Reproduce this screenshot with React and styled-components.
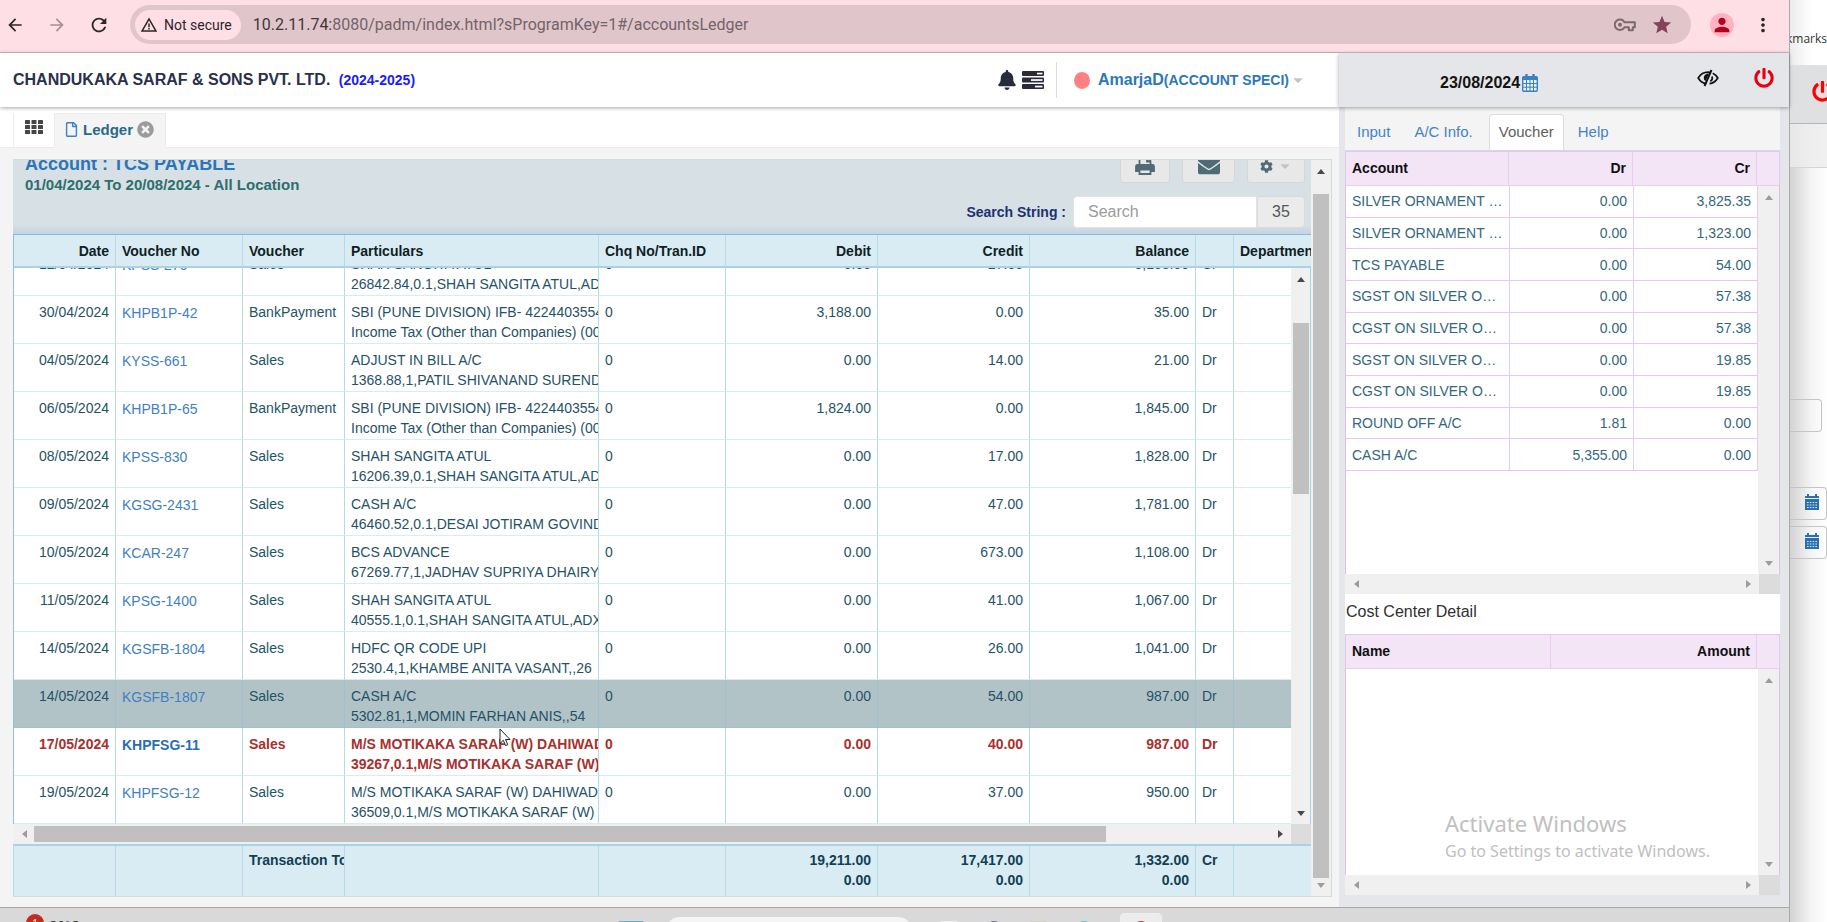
import React from "react";
import styled, { createGlobalStyle, css } from "styled-components";
import { FaBell, FaEnvelope, FaCog, FaPowerOff, FaRegFile, FaCaretDown, FaTimesCircle } from "react-icons/fa";
import { MdArrowBack, MdArrowForward, MdRefresh, MdWarningAmber, MdStar, MdPerson, MdMoreVert } from "react-icons/md";

const sans = `"Liberation Sans", Arial, sans-serif`;
const system = `"Open Sans", "Noto Sans", sans-serif`;

const GlobalStyle = createGlobalStyle`
  * { box-sizing: border-box; }
  body { margin: 0; font-family: ${sans}; font-size: 14px; color: #1f5266; background: #fff; }
  button, input { font: inherit; color: inherit; margin: 0; }
  button { cursor: pointer; }
  svg { display: block; flex: none; }
`;

const Desktop = styled.div`
  display: grid;
  grid-template-columns: minmax(0, 1fr) 38px;
  height: 100vh;
  overflow: hidden;
`;

const Screen = styled.div`
  display: flex;
  flex-direction: column;
  min-width: 0;
  min-height: 0;
`;

/* browser toolbar */
const BrowserBar = styled.header`
  display: flex;
  align-items: center;
  height: 53px;
  flex: none;
  padding: 0 15px 3px 4px;
  background: #ffdfe6;
  border-bottom: 1px solid #d3b9be;
  font-family: Roboto, sans-serif;
  color: #2d2628;
`;
const BarButton = styled.button`
  display: grid;
  place-items: center;
  width: 22px;
  height: 38px;
  padding: 0;
  border: 0;
  background: none;
  color: ${(p) => (p.$dim ? "#a58e95" : "inherit")};
`;
const NavGroup = styled.nav`
  display: flex;
  gap: 20px;
  width: 126px;
`;
const Address = styled.div`
  display: flex;
  align-items: center;
  flex: 1;
  min-width: 0;
  height: 39px;
  padding: 0 18px 0 5px;
  border-radius: 20px;
  background: #e0c6cb;
`;
const Insecure = styled.span`
  display: flex;
  align-items: center;
  gap: 6px;
  height: 30px;
  padding: 0 9px 0 5px;
  border-radius: 15px;
  background: #ffdfe6;
  font-size: 14px;
  white-space: nowrap;
`;
const Url = styled.span`
  flex: 1;
  padding-left: 12px;
  font-size: 16px;
  color: #74636a;
  white-space: nowrap;
  overflow: hidden;
  b { font-weight: 400; color: #40363a; }
`;
const AddressIcons = styled.span`
  display: flex;
  align-items: center;
  gap: 15px;
  color: #85425b;
`;
const Avatar = styled.span`
  display: grid;
  place-items: center;
  width: 24px;
  height: 24px;
  border-radius: 50%;
  background: #ffb3c1;
  color: #b3001f;
`;
const BarEnd = styled.div`
  display: flex;
  align-items: center;
  gap: 18px;
  padding-left: 19px;
`;

/* application frame */
const AppArea = styled.div`
  display: flex;
  flex: 1;
  min-height: 0;
`;
const MainColumn = styled.main`
  display: flex;
  flex-direction: column;
  flex: 1;
  min-width: 0;
  background: #f4f4f4;
`;
const topBar = css`
  display: flex;
  align-items: center;
  flex: none;
  height: 54px;
  position: relative;
  z-index: 1;
  box-shadow: 0 1px 4px rgba(0, 0, 0, 0.35);
`;
const CompanyBar = styled.div`
  ${topBar}
  padding: 0 34px 0 13px;
  background: #fff;
`;
const Company = styled.h1`
  flex: 1;
  margin: 0;
  font-size: 16px;
  color: #29304a;
  span { margin-left: 4px; font-size: 14px; color: #1a1aff; }
`;
const CompanyIcons = styled.div`
  display: flex;
  align-items: center;
  gap: 5px;
  height: 36px;
  padding-right: 12px;
  border-right: 1px solid #dcdcdc;
  color: #272b3b;
`;
const UserMenu = styled.button`
  display: flex;
  align-items: center;
  gap: 8px;
  padding: 0 0 0 17px;
  border: 0;
  background: none;
  color: #2b78b9;
  font-weight: 700;
  font-size: 14px;
  white-space: nowrap;
  strong { font-size: 16px; }
`;
const Dot = styled.i`
  width: 16px;
  height: 17px;
  border-radius: 50%;
  background: #ff8080;
`;
const UserCaret = styled(FaCaretDown)`
  margin-left: -6px;
  color: #c4c4c4;
`;

const DocTabs = styled.div`
  display: flex;
  align-items: flex-end;
  flex: none;
  height: 41px;
  padding-left: 13px;
  background: #fff;
  border-bottom: 1px solid #ebebeb;
`;
const AppsButton = styled.button`
  display: grid;
  place-items: center;
  width: 41px;
  height: 34px;
  padding: 0 0 6px;
  border: 0;
  border-left: 1px solid #ececec;
  background: none;
  color: #454545;
`;
const DocTab = styled.div`
  display: flex;
  align-items: center;
  gap: 4px;
  height: 35px;
  width: 112px;
  margin-bottom: -1px;
  padding: 0 0 4px 9px;
  border: 1px solid #ececec;
  border-bottom: 0;
  background: #f4f4f4;
  color: #2b6a86;
  font-size: 15px;
  font-weight: 700;
  > svg { color: #3c83c4; }
`;
const CloseButton = styled.button`
  padding: 0;
  border: 0;
  background: none;
  color: #9b9b9b;
`;

const PanelSpace = styled.div`
  display: flex;
  flex: 1;
  min-height: 0;
  padding: 11px 7px 10px 13px;
`;
const Panel = styled.section`
  display: flex;
  flex: 1;
  min-width: 0;
  border: 1px solid #d3dcdf;
  border-left: 0;
`;
const Ledger = styled.div`
  display: flex;
  flex-direction: column;
  flex: 1;
  min-width: 0;
  background: #d6e0e5;
  overflow: hidden;
`;
const LedgerHead = styled.div`
  display: flex;
  justify-content: space-between;
  align-items: flex-end;
  flex: none;
  height: 74px;
  padding: 0 6px 6px 12px;
  overflow: hidden;
  background: linear-gradient(#d6e0e5 88%, #c3d3e2);
`;
const LedgerTitle = styled.div`
  height: 75px;
  color: #2d6f6c;
  font-size: 15px;
  font-weight: 700;
  line-height: 20px;
  h2 { margin: 0; font-size: 18px; line-height: 22px; color: #2c74b8; }
`;
const LedgerTools = styled.div`
  display: flex;
  flex-direction: column;
  align-items: flex-end;
  gap: 13px;
`;
const ToolRow = styled.div`
  display: flex;
  gap: 12px;
`;
const ToolButton = styled.button`
  display: flex;
  align-items: center;
  justify-content: center;
  gap: 5px;
  width: ${(p) => p.$w || 50}px;
  height: 34px;
  padding: 0;
  border: 1px solid #d6d6d6;
  border-radius: 3px;
  background: #e8e8e8;
  color: #4f6b76;
`;
const SearchRow = styled.div`
  display: flex;
  align-items: center;
  label { padding-right: 7px; color: #1c3170; font-weight: 700; }
  input {
    width: 184px;
    height: 32px;
    padding: 0 14px;
    border: 1px solid #e3e3e3;
    border-radius: 4px 0 0 4px;
    background: #fff;
    font-size: 16px;
    outline: 0;
  }
  input::placeholder { color: #9b9b9b; opacity: 1; }
  output {
    width: 48px;
    height: 32px;
    border: 1px solid #dadada;
    border-radius: 0 4px 4px 0;
    background: #ebebeb;
    color: #555;
    font-size: 16px;
    line-height: 30px;
    text-align: center;
  }
`;

const Grid = styled.table`
  width: 100%;
  table-layout: fixed;
  border-collapse: separate;
  border-spacing: 0;
  th, td {
    padding: 6px 6px 1px;
    border-right: 1px solid #b5dae8;
    line-height: 20px;
    text-align: left;
    vertical-align: top;
    white-space: nowrap;
    overflow: hidden;
  }
  th:last-child, td:last-child { padding-right: 0; border-right: 0; }
  .num { text-align: right; }
`;
const GridHead = styled(Grid)`
  flex: none;
  border-top: 1px solid #8abadb;
  border-left: 1px solid #8fc0da;
  background: #d9ecf4;
  th { height: 33px; border-bottom: 2px solid #aad2e4; color: #0f1e24; }
`;
const GridScroller = styled.div`
  display: flex;
  flex: 1;
  min-height: 0;
  border-right: 1px solid #a9d2e6;
  background: #fff;
`;
const GridView = styled.div`
  flex: 1;
  min-width: 0;
  overflow: hidden;
  border-left: 1px solid #8fc0da;
`;
const GridBody = styled(Grid)`
  margin-top: -20px;
  td { height: 48px; border-bottom: 1px solid #d8ecf3; }
  a { display: block; line-height: 22px; color: #427fc1; text-decoration: none; }
`;
const Row = styled.tr`
  ${(p) => p.$state === "selected" && css`background: #b2c3c7; td { border-color: #9fc1cd; }`}
  ${(p) => p.$state === "flagged" && css`color: #a8302d; font-weight: 700; a { color: #2b6cb5; }`}
`;
const GridFoot = styled(Grid)`
  flex: none;
  border-top: 2px solid #aad2e4;
  border-left: 1px solid #b5dae8;
  background: #d9ecf4;
  color: #123f54;
  font-weight: 700;
  td { height: 50px; padding-top: 4px; }
`;

/* scroll bars */
const Track = styled.div`
  display: flex;
  align-items: center;
  justify-content: space-between;
  flex: none;
  background: #f0f0f0;
  color: ${(p) => (p.$dim ? "#9c9c9c" : "#484848")};
  ${(p) => p.$dimStart && css`> :first-child { color: #9c9c9c; }`}
  ${(p) => p.$dimEnd && css`> :last-child { color: #9c9c9c; }`}
  ${(p) => (p.$v
    ? css`flex-direction: column; width: ${p.$size}px; padding: 9px 0 8px;`
    : css`height: ${p.$size}px; padding: 0 8px 0 9px;`)}
`;
const Thumb = styled.div`
  background: #c0c0c0;
  ${(p) => (p.$v ? css`width: 16px;` : css`height: 16px;`)}
  flex: 0 0 ${(p) => p.$length};
  ${(p) => p.$lead && css`margin-${p.$v ? "top" : "left"}: ${p.$lead}px;`}
  ${(p) => (p.$v ? css`margin-bottom: auto;` : css`margin-right: auto;`)}
`;
const HRow = styled.div`
  display: flex;
  flex: none;
  > :first-child { flex: 1; }
`;
const Corner = styled.div`
  width: ${(p) => p.$w}px;
  background: #dcdcdc;
`;

/* side column */
const Side = styled.aside`
  display: flex;
  flex-direction: column;
  flex: none;
  width: 450px;
  background: #e4e6e9;
`;
const SideBar = styled.div`
  ${topBar}
  padding: 0 15px 0 101px;
  background: #e4e6e9;
`;
const DateField = styled.button`
  display: flex;
  align-items: center;
  gap: 2px;
  padding: 6px 0 0;
  margin-right: auto;
  border: 0;
  background: none;
  color: #141414;
  font-size: 16px;
  font-weight: 700;
`;
const IconButton = styled.button`
  padding: 0 0 4px;
  border: 0;
  background: none;
  color: ${(p) => p.$color};
  margin-left: 35px;
`;
const SideBody = styled.div`
  display: flex;
  flex-direction: column;
  flex: 1;
  min-height: 0;
  padding: 0 9px 12px 6px;
`;
const SideTabs = styled.div`
  display: flex;
  align-items: flex-end;
  flex: none;
  height: 44px;
  background: #f4f4f4;
  border-bottom: 1px solid #d5dbe2;
`;
const SideTab = styled.button`
  height: 36px;
  padding: 0 ${(p) => (p.$active ? 9 : 11)}px 3px;
  border: 1px solid transparent;
  border-bottom: 0;
  border-radius: 4px 4px 0 0;
  background: none;
  color: #4582c3;
  font-size: 15px;
  ${(p) => p.$active && css`margin: 0 2px 0 4px; background: #fff; border-color: #dcdcdc; color: #606060;`}
`;
const SideTable = styled.table`
  width: 100%;
  table-layout: fixed;
  border-collapse: separate;
  border-spacing: 0;
  th, td {
    padding: 0 6px;
    text-align: left;
    white-space: nowrap;
    overflow: hidden;
    text-overflow: ellipsis;
    border-right: 1px solid #ecc9ee;
    border-bottom: 1px solid #e8c5ea;
  }
  .num { text-align: right; }
`;
const SideHead = styled(SideTable)`
  flex: none;
  border: solid #dccbea;
  border-width: 1px 1px 0;
  background: #f3e4f6;
  color: #101010;
  th { height: 34px; padding-bottom: 2px; border-color: #ebcdef; }
  th:last-child { border-right: 0; }
`;
const SideRows = styled(SideTable)`
  height: 285px;
  color: #33677c;
`;
const SideBlock = styled.div`
  display: flex;
  flex-direction: column;
  min-height: 0;
  ${(p) => (p.$grow ? css`flex: 1;` : css`flex: 0 0 487px;`)}
`;
const SideScroller = styled.div`
  display: flex;
  flex: 1;
  min-height: 0;
  border: solid #dfbfe6;
  border-width: 0 1px;
  background: #fff;
`;
const SideView = styled.div`
  position: relative;
  flex: 1;
  min-width: 0;
  overflow: hidden;
`;
const SideHeading = styled.h3`
  flex: none;
  height: 40px;
  margin: 0;
  padding-left: 1px;
  background: #fff;
  color: #303030;
  font-size: 16px;
  font-weight: 400;
  line-height: 36px;
`;
const Watermark = styled.div`
  position: absolute;
  right: 45px;
  bottom: 12px;
  width: 268px;
  font-family: "Noto Sans", sans-serif;
  color: #c0c0c0;
  font-size: 16px;
  line-height: 24px;
  white-space: nowrap;
  p { margin: 0; font-size: 22px; line-height: 32px; }
`;

/* task bar, cut off by the lower screen edge */
const TaskBar = styled.footer`
  display: flex;
  align-items: flex-start;
  flex: none;
  height: 15px;
  overflow: hidden;
  padding: 0 97px 0 26px;
  background: #d9d9d9;
  border-top: 1px solid #a8a8a8;
  font-family: ${system};
  font-size: 13px;
  line-height: 18px;
  color: #333;
`;
const Weather = styled.span`
  display: flex;
  gap: 6px;
  padding-top: 6px;
  i {
    width: 18px;
    height: 18px;
    border-radius: 50%;
    background: #c42b1c;
    color: #fff;
    font-size: 10px;
    font-style: normal;
    text-align: center;
  }
  span { padding-top: 2px; }
`;
const TaskGroup = styled.div`
  display: flex;
  flex: 1;
  align-items: flex-start;
  justify-content: center;
  gap: 27px;
  padding: 9px 0 0 220px;
`;
const TaskSearch = styled.span`
  width: 248px;
  height: 30px;
  margin-left: -6px;
  border-radius: 15px;
  background: #f5f5f5;
`;
const TaskIcon = styled.i`
  width: ${(p) => p.$w || 18}px;
  height: 20px;
  margin-top: 4px;
  border-radius: ${(p) => (p.$round ? "50%" : "2px")};
  background: ${(p) => p.$c};
`;
const ActiveTask = styled.span`
  display: flex;
  justify-content: center;
  width: 42px;
  height: 30px;
  margin-top: -4px;
  border: 1px solid #efefef;
  border-radius: 4px;
  background: #ececec;
  i { margin-top: 7px; }
`;
const Clock = styled.span`
  display: flex;
  gap: 152px;
  padding-top: 9px;
`;

/* window behind, seen as a strip on the right */
const Behind = styled.div`
  display: flex;
  flex-direction: column;
  overflow: hidden;
  border-left: 1px solid #a9a9a9;
  background: linear-gradient(to right, #d3d3d3, #f3f3f3 55%, #fff);
`;
const BehindTop = styled.div`
  display: flex;
  justify-content: flex-end;
  height: 65px;
  flex: none;
  padding-top: 29px;
  background: linear-gradient(to right, #ececec, #fff 60%);
  font-family: ${system};
  font-size: 12px;
  line-height: 20px;
  color: #333;
  white-space: nowrap;
`;
const BehindHeader = styled.div`
  display: flex;
  align-items: center;
  height: 59px;
  flex: none;
  padding: 0 0 6px 22px;
  background: #dfe0e2;
  border-bottom: 1px solid #b5b5b5;
  color: #f00;
`;
const BehindTabs = styled.div`
  height: 44px;
  flex: none;
  background: rgba(236, 236, 236, 0.8);
  border-bottom: 1px solid #d5d5d5;
`;
const BehindFields = styled.div`
  display: flex;
  flex-direction: column;
  padding-top: 231px;
`;
const BehindField = styled.div`
  display: flex;
  align-items: center;
  justify-content: flex-end;
  width: ${(p) => p.$w};
  height: 33px;
  margin-bottom: ${(p) => p.$gap}px;
  padding: 0 7px 4px 0;
  border: 1px solid #c4c4c4;
  border-left: 0;
  border-radius: 0 4px 4px 0;
`;

const Pointer = styled.svg`
  position: fixed;
  left: 499px;
  top: 728px;
`;

const Tri = ({ dir }) => {
  const d = { up: "M0 5h8L4 0z", down: "M0 0h8L4 5z", left: "M5 0v8L0 4z", right: "M0 0v8l5-4z" }[dir];
  const v = dir === "up" || dir === "down";
  return (
    <svg width={v ? 8 : 5} height={v ? 5 : 8} viewBox={v ? "0 0 8 5" : "0 0 5 8"} fill="currentColor">
      <path d={d} />
    </svg>
  );
};
const ScrollBar = ({ v, size = 20, dim, dimStart, dimEnd, children }) => (
  <Track $v={v} $size={size} $dim={dim} $dimStart={dimStart} $dimEnd={dimEnd} aria-hidden="true">
    <Tri dir={v ? "up" : "left"} />
    {children}
    <Tri dir={v ? "down" : "right"} />
  </Track>
);

const KeyIcon = () => (
  <svg width="22" height="14" viewBox="0 0 22 14" fill="none" stroke="#7c686e" strokeWidth="2">
    <path d="M10.5 4.2h10.3v5h-2v3h-4v-3h-4.3A5.2 5.2 0 1 1 10.5 4.2z" strokeLinejoin="round" />
    <circle cx="6" cy="6.8" r="2" fill="#7c686e" stroke="none" />
  </svg>
);
const TasksIcon = () => (
  <svg width="22" height="18" viewBox="0 0 22 18">
    <g fill="currentColor">
      <rect width="22" height="5" rx="1" />
      <rect y="6.5" width="22" height="5" rx="1" />
      <rect y="13" width="22" height="5" rx="1" />
    </g>
    <g fill="#fff">
      <rect x="15" y="1.7" width="5.5" height="1.7" />
      <rect x="9" y="8.2" width="11.5" height="1.7" />
      <rect x="13" y="14.7" width="7.5" height="1.7" />
    </g>
  </svg>
);
const GridIcon = () => (
  <svg width="18" height="14" viewBox="0 0 18 14" fill="currentColor">
    {[0, 5, 10].map((y) => [0, 6.5, 13].map((x) => <rect key={`${x}-${y}`} x={x} y={y} width="5" height="4" rx="0.6" />))}
  </svg>
);
const PrintIcon = () => (
  <svg width="20" height="18" viewBox="0 0 20 18" fill="none" stroke="currentColor" strokeWidth="1.8">
    <path d="M4.5 8V1h8l3 3v4M12 1v3.5h3.5" />
    <path d="M2.5 8h15q1.5 0 1.5 1.5V14H1V9.5Q1 8 2.5 8z" fill="currentColor" />
    <path d="M4.5 12.5h11v4.5h-11z" fill="#e8e8e8" />
  </svg>
);
const CalendarIcon = () => (
  <svg width="16" height="18" viewBox="0 0 16 18" fill="none" stroke="#3a80c2">
    <rect x="0.7" y="2.7" width="14.6" height="14.6" rx="1" strokeWidth="1.4" fill="#e9f0f7" />
    <path d="M1 4.5h14" strokeWidth="3" />
    <path d="M4.5 0v4M11.5 0v4" strokeWidth="2.4" />
    <path d="M4.5 6v11M8 6v11M11.5 6v11M1 9.5h14M1 13.2h14" />
  </svg>
);
const EyeSlashIcon = () => (
  <svg width="22" height="18" viewBox="0 0 22 18" fill="none" stroke="currentColor" strokeWidth="1.7">
    <path d="M9.5 14.7C5.5 14.2 3 12 1.2 9 3.5 5.3 7 3.2 11 3.2l2 .2M15.7 4.3C18 5.4 19.6 7 20.8 9c-1.8 3-4.8 5.2-8.3 5.7" />
    <path d="M14.5 1 7.5 17" strokeWidth="2" />
    <path d="M10.7 4.7C8 5 6.6 7 6.8 9.2c.1 1.3.8 2.2 1.7 2.8l3.3-7.3z" fill="currentColor" stroke="none" />
    <path d="M15 7.5c.7 2-.2 3.9-1.7 4.7" />
  </svg>
);
const SolidCalendar = () => (
  <svg width="14" height="16" viewBox="0 0 14 16">
    <path d="M0 2h2V0h2v2h6V0h2v2h2v14H0z" fill="#2a6fb0" />
    <path d="M0 4.5h14" stroke="#e6eef6" />
    <path d="M2 8.5h10M2 11h10M2 13.5h10" stroke="#d5e4f2" strokeWidth="1.2" strokeDasharray="1.6 1.2" />
  </svg>
);

const widths = [102, 127, 102, 254, 127, 152, 152, 166, 38];
const Cols = () => (
  <colgroup>
    {widths.map((w, i) => <col key={i} width={w} />)}
    <col />
  </colgroup>
);
const numeric = [0, 5, 6, 7];
const cls = (i) => (numeric.includes(i) ? "num" : undefined);

const heads = ["Date", "Voucher No", "Voucher", "Particulars", "Chq No/Tran.ID", "Debit", "Credit", "Balance", "", "Department"];
const entries = [
  ["12/04/2024", "KPSS-276", "Sales", "SHAH SANGITA ATUL", "26842.84,0.1,SHAH SANGITA ATUL,ADX", "0.00", "27.00", "3,153.00", "Cr"],
  ["30/04/2024", "KHPB1P-42", "BankPayment", "SBI (PUNE DIVISION) IFB- 42244035542", "Income Tax (Other than Companies) (0020)", "3,188.00", "0.00", "35.00", "Dr"],
  ["04/05/2024", "KYSS-661", "Sales", "ADJUST IN BILL A/C", "1368.88,1,PATIL SHIVANAND SURENDRA", "0.00", "14.00", "21.00", "Dr"],
  ["06/05/2024", "KHPB1P-65", "BankPayment", "SBI (PUNE DIVISION) IFB- 42244035542", "Income Tax (Other than Companies) (0020)", "1,824.00", "0.00", "1,845.00", "Dr"],
  ["08/05/2024", "KPSS-830", "Sales", "SHAH SANGITA ATUL", "16206.39,0.1,SHAH SANGITA ATUL,ADX", "0.00", "17.00", "1,828.00", "Dr"],
  ["09/05/2024", "KGSG-2431", "Sales", "CASH A/C", "46460.52,0.1,DESAI JOTIRAM GOVIND", "0.00", "47.00", "1,781.00", "Dr"],
  ["10/05/2024", "KCAR-247", "Sales", "BCS ADVANCE", "67269.77,1,JADHAV SUPRIYA DHAIRYA", "0.00", "673.00", "1,108.00", "Dr"],
  ["11/05/2024", "KPSG-1400", "Sales", "SHAH SANGITA ATUL", "40555.1,0.1,SHAH SANGITA ATUL,ADX", "0.00", "41.00", "1,067.00", "Dr"],
  ["14/05/2024", "KGSFB-1804", "Sales", "HDFC QR CODE UPI", "2530.4,1,KHAMBE ANITA VASANT,,26", "0.00", "26.00", "1,041.00", "Dr"],
  ["14/05/2024", "KGSFB-1807", "Sales", "CASH A/C", "5302.81,1,MOMIN FARHAN ANIS,,54", "0.00", "54.00", "987.00", "Dr", "selected"],
  ["17/05/2024", "KHPFSG-11", "Sales", "M/S MOTIKAKA SARAF (W) DAHIWADI", "39267,0.1,M/S MOTIKAKA SARAF (W)", "0.00", "40.00", "987.00", "Dr", "flagged"],
  ["19/05/2024", "KHPFSG-12", "Sales", "M/S MOTIKAKA SARAF (W) DAHIWADI", "36509,0.1,M/S MOTIKAKA SARAF (W)", "0.00", "37.00", "950.00", "Dr"],
];
const lines = [
  ["SILVER ORNAMENT SALES", "0.00", "3,825.35"],
  ["SILVER ORNAMENT SALES", "0.00", "1,323.00"],
  ["TCS PAYABLE", "0.00", "54.00"],
  ["SGST ON SILVER ORNAMENT", "0.00", "57.38"],
  ["CGST ON SILVER ORNAMENT", "0.00", "57.38"],
  ["SGST ON SILVER ORNAMENT", "0.00", "19.85"],
  ["CGST ON SILVER ORNAMENT", "0.00", "19.85"],
  ["ROUND OFF A/C", "1.81", "0.00"],
  ["CASH A/C", "5,355.00", "0.00"],
];

const Entry = ({ entry: [date, no, kind, name, note, debit, credit, balance, side, state] }) => (
  <Row $state={state}>
    <td className="num">{date}</td>
    <td><a href="#voucher">{no}</a></td>
    <td>{kind}</td>
    <td>{name}<br />{note}</td>
    <td>0</td>
    <td className="num">{debit}</td>
    <td className="num">{credit}</td>
    <td className="num">{balance}</td>
    <td>{side}</td>
    <td />
  </Row>
);

const SideFrame = ({ children }) => (
  <>
    <SideScroller>
      <SideView>{children}</SideView>
      <ScrollBar v dim size={21} />
    </SideScroller>
    <HRow>
      <ScrollBar dim />
      <Corner $w={21} />
    </HRow>
  </>
);

export default function App() {
  return (
    <Desktop>
      <GlobalStyle />
      <Screen>
        <BrowserBar>
          <NavGroup>
            <BarButton aria-label="Back"><MdArrowBack size={20} /></BarButton>
            <BarButton $dim aria-label="Forward"><MdArrowForward size={20} /></BarButton>
            <BarButton aria-label="Reload"><MdRefresh size={22} /></BarButton>
          </NavGroup>
          <Address>
            <Insecure><MdWarningAmber size={18} />Not secure</Insecure>
            <Url><b>10.2.11.74:</b>8080/padm/index.html?sProgramKey=1#/accountsLedger</Url>
            <AddressIcons><KeyIcon /><MdStar size={22} /></AddressIcons>
          </Address>
          <BarEnd>
            <Avatar><MdPerson size={22} /></Avatar>
            <BarButton aria-label="Menu"><MdMoreVert size={22} /></BarButton>
          </BarEnd>
        </BrowserBar>

        <AppArea>
          <MainColumn>
            <CompanyBar>
              <Company>CHANDUKAKA SARAF &amp; SONS PVT. LTD. <span>(2024-2025)</span></Company>
              <CompanyIcons><FaBell size={20} /><TasksIcon /></CompanyIcons>
              <UserMenu>
                <Dot />
                <span><strong>AmarjaD</strong>(ACCOUNT SPECI)</span>
                <UserCaret size={14} />
              </UserMenu>
            </CompanyBar>

            <DocTabs>
              <AppsButton aria-label="Programs"><GridIcon /></AppsButton>
              <DocTab>
                <FaRegFile size={15} />Ledger
                <CloseButton aria-label="Close Ledger"><FaTimesCircle size={17} /></CloseButton>
              </DocTab>
            </DocTabs>

            <PanelSpace>
              <Panel>
                <Ledger>
                  <LedgerHead>
                    <LedgerTitle>
                      <h2>Account : TCS PAYABLE</h2>
                      01/04/2024 To 20/08/2024 - All Location
                    </LedgerTitle>
                    <LedgerTools>
                      <ToolRow>
                        <ToolButton aria-label="Print"><PrintIcon /></ToolButton>
                        <ToolButton $w={53} aria-label="Mail"><FaEnvelope size={22} /></ToolButton>
                        <ToolButton $w={58} aria-label="Settings"><FaCog size={13} /><FaCaretDown color="#c4c4c4" size={14} /></ToolButton>
                      </ToolRow>
                      <SearchRow>
                        <label htmlFor="search">Search String :</label>
                        <input id="search" type="text" placeholder="Search" />
                        <output htmlFor="search">35</output>
                      </SearchRow>
                    </LedgerTools>
                  </LedgerHead>

                  <GridHead>
                    <Cols />
                    <thead><tr>{heads.map((h, i) => <th key={i} className={cls(i)}>{h}</th>)}</tr></thead>
                  </GridHead>
                  <GridScroller>
                    <GridView>
                      <GridBody>
                        <Cols />
                        <tbody>{entries.map((e) => <Entry key={e[1]} entry={e} />)}</tbody>
                      </GridBody>
                    </GridView>
                    <ScrollBar v size={19}>
                      <Thumb $v $length="171px" $lead={41} />
                    </ScrollBar>
                  </GridScroller>
                  <HRow>
                    <ScrollBar dimStart><Thumb $length="85%" $lead={7} /></ScrollBar>
                    <Corner $w={20} />
                  </HRow>
                  <GridFoot>
                    <Cols />
                    <tbody>
                      <tr>
                        <td /><td /><td>Transaction Total</td><td /><td />
                        <td className="num">19,211.00<br />0.00</td>
                        <td className="num">17,417.00<br />0.00</td>
                        <td className="num">1,332.00<br />0.00</td>
                        <td>Cr</td><td />
                      </tr>
                    </tbody>
                  </GridFoot>
                </Ledger>
                <ScrollBar v dimEnd><Thumb $v $length="calc(100% - 35px)" $lead={20} /></ScrollBar>
              </Panel>
            </PanelSpace>
          </MainColumn>

          <Side>
            <SideBar>
              <DateField>23/08/2024<CalendarIcon /></DateField>
              <IconButton $color="#111" aria-label="Hide"><EyeSlashIcon /></IconButton>
              <IconButton $color="#e80010" aria-label="Log out"><FaPowerOff size={20} /></IconButton>
            </SideBar>
            <SideBody>
              <SideBlock>
                <SideTabs>
                  <SideTab>Input</SideTab>
                  <SideTab>A/C Info.</SideTab>
                  <SideTab $active>Voucher</SideTab>
                  <SideTab>Help</SideTab>
                </SideTabs>
                <SideHead>
                  <colgroup><col /><col width="124" /><col width="124" /><col width="22" /></colgroup>
                  <thead><tr><th>Account</th><th className="num">Dr</th><th className="num">Cr</th><th /></tr></thead>
                </SideHead>
                <SideFrame>
                  <SideRows>
                    <colgroup><col /><col width="124" /><col width="124" /></colgroup>
                    <tbody>
                      {lines.map(([name, dr, cr], i) => (
                        <tr key={i}><td>{name}</td><td className="num">{dr}</td><td className="num">{cr}</td></tr>
                      ))}
                    </tbody>
                  </SideRows>
                </SideFrame>
              </SideBlock>
              <SideHeading>Cost Center Detail</SideHeading>
              <SideBlock $grow>
                <SideHead>
                  <colgroup><col /><col width="206" /><col width="22" /></colgroup>
                  <thead><tr><th>Name</th><th className="num">Amount</th><th /></tr></thead>
                </SideHead>
                <SideFrame>
                  <Watermark>
                    <p>Activate Windows</p>
                    Go to Settings to activate Windows.
                  </Watermark>
                </SideFrame>
              </SideBlock>
            </SideBody>
          </Side>
        </AppArea>

        <TaskBar>
          <Weather><i>1</i><span>30°C</span></Weather>
          <TaskGroup>
            <TaskIcon $w={26} $c="#58b4dc" />
            <TaskSearch />
            <TaskIcon $c="#f0f0f0" />
            <TaskIcon $round $c="#6a66b0" />
            <TaskIcon $c="#d9d2b8" />
            <TaskIcon $round $c="#4ac6e6" />
            <ActiveTask><TaskIcon $round $c="#c9372e" /></ActiveTask>
          </TaskGroup>
          <Clock><span>ENG</span><span>11:33</span></Clock>
        </TaskBar>
      </Screen>

      <Behind>
        <BehindTop>kmarks</BehindTop>
        <BehindHeader><FaPowerOff size={21} /></BehindHeader>
        <BehindTabs />
        <BehindFields>
          <BehindField $w="32px" $gap={55} />
          <BehindField $w="100%" $gap={6}><SolidCalendar /></BehindField>
          <BehindField $w="100%" $gap={0}><SolidCalendar /></BehindField>
        </BehindFields>
      </Behind>

      <Pointer width="12" height="19" viewBox="0 0 12 19" fill="#fff" stroke="#222" aria-hidden="true">
        <path d="M1 1v14.5l3.3-3.2 2.3 5.4 2.2-1-2.3-5.2H11z" />
      </Pointer>
    </Desktop>
  );
}
